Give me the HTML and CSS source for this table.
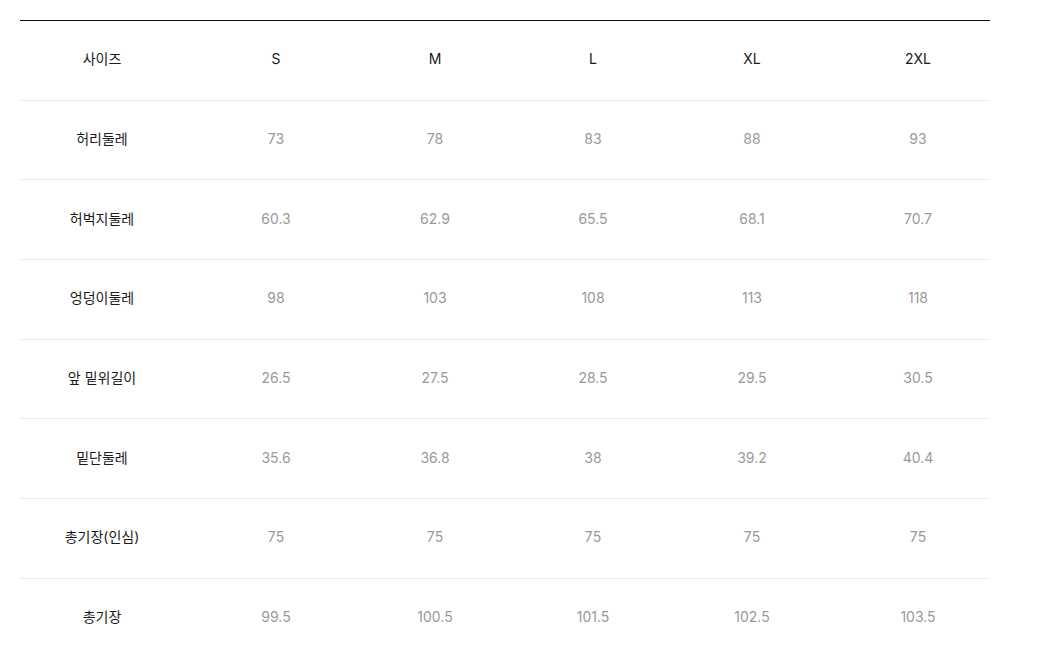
FILE: index.html
```html
<!DOCTYPE html>
<html lang="ko">
<head>
<meta charset="utf-8">
<title>사이즈표</title>
<link rel="stylesheet" href="styles.css">
</head>
<body>
<div class="size-table">
  <div class="row head">
    <div class="cell label">사이즈</div>
    <div class="cell">S</div>
    <div class="cell">M</div>
    <div class="cell">L</div>
    <div class="cell">XL</div>
    <div class="cell last">2XL</div>
  </div>
  <div class="row">
    <div class="cell label">허리둘레</div>
    <div class="cell">73</div><div class="cell">78</div><div class="cell">83</div><div class="cell">88</div><div class="cell last">93</div>
  </div>
  <div class="row">
    <div class="cell label">허벅지둘레</div>
    <div class="cell">60.3</div><div class="cell">62.9</div><div class="cell">65.5</div><div class="cell">68.1</div><div class="cell last">70.7</div>
  </div>
  <div class="row">
    <div class="cell label">엉덩이둘레</div>
    <div class="cell">98</div><div class="cell">103</div><div class="cell">108</div><div class="cell">113</div><div class="cell last">118</div>
  </div>
  <div class="row">
    <div class="cell label">앞 밑위길이</div>
    <div class="cell">26.5</div><div class="cell">27.5</div><div class="cell">28.5</div><div class="cell">29.5</div><div class="cell last">30.5</div>
  </div>
  <div class="row">
    <div class="cell label">밑단둘레</div>
    <div class="cell">35.6</div><div class="cell">36.8</div><div class="cell">38</div><div class="cell">39.2</div><div class="cell last">40.4</div>
  </div>
  <div class="row">
    <div class="cell label">총기장(인심)</div>
    <div class="cell">75</div><div class="cell">75</div><div class="cell">75</div><div class="cell">75</div><div class="cell last">75</div>
  </div>
  <div class="row">
    <div class="cell label">총기장</div>
    <div class="cell">99.5</div><div class="cell">100.5</div><div class="cell">101.5</div><div class="cell">102.5</div><div class="cell last">103.5</div>
  </div>
</div>
</body>
</html>
```

FILE: styles.css
```css
html, body {
  margin: 0;
  padding: 0;
  background: #fff;
}
body {
  padding: 20px 0 0 20px;
  font-family: Inter, "Noto Sans CJK KR", sans-serif;
  font-size: 14px;
  color: #999;
}
.size-table {
  width: 970px;
  border-top: 1px solid #111;
}
.row {
  display: grid;
  grid-template-columns: 164px 184px 134px 182px 136px 170px;
  height: 78.7px;
  border-bottom: 1px solid #ebebeb;
  align-items: center;
}
.cell {
  text-align: center;
  line-height: 20px;
  padding-bottom: 2px;
}
.cell.last {
  padding-left: 26px;
}
.label, .head .cell {
  color: #1a1a1a;
}
```
